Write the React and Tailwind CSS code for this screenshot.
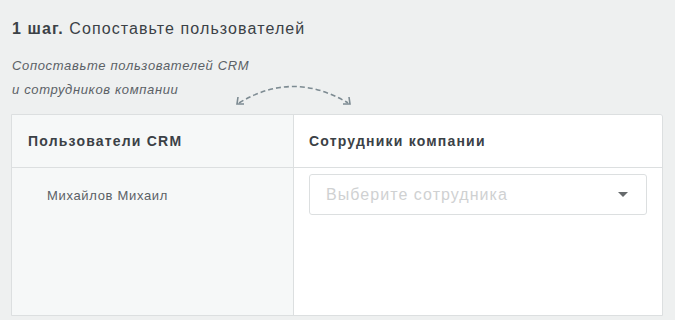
import React from 'react';

// Пунктирная дуга со стрелками между колонками
const ArcArrows = () => (
  <svg width="124" height="30" viewBox="0 0 124 30" className="absolute left-[231px] top-[78px]">
    <path d="M8 25 Q62 -8 117 25" fill="none" stroke="#7d8b92" strokeWidth="1.6" strokeDasharray="5 3" />
    <path d="M7 19 L6 26 L13 26" fill="none" stroke="#7d8b92" strokeWidth="1.6" />
    <path d="M112 26 L119 26 L118 19" fill="none" stroke="#7d8b92" strokeWidth="1.6" />
  </svg>
);

const App = () => {
  const users = [{ id: 1, name: 'Михайлов Михаил' }];

  return (
    <div className="relative w-[675px] h-[320px] bg-[#eef0f0] overflow-hidden font-['Liberation_Sans',Arial,sans-serif]">
      <div className="pl-3 pt-[19px] text-[16px] leading-5 tracking-[1.1px] text-[#3b4146]">
        <span className="font-bold">1 шаг.</span> Сопоставьте пользователей
      </div>
      <div className="pl-3 pt-[15px] text-[13px] leading-6 italic tracking-[0.65px] text-[#5b6166]">
        <div>Сопоставьте пользователей CRM</div>
        <div>и сотрудников компании</div>
      </div>
      <ArcArrows />
      <div className="ml-[11px] mt-[12px] w-[652px] h-[202px] flex border border-[#dcdfe0] rounded-tr-[3px] overflow-hidden">
        <div className="w-[282px] bg-[#f6f8f8] border-r border-[#dcdfe0] flex flex-col">
          <div className="h-[53px] border-b border-[#dcdfe0] flex items-center pl-4 text-[14px] font-bold tracking-[1.2px] text-[#3b4146]">
            Пользователи CRM
          </div>
          {users.map((u) => (
            <div key={u.id} className="pl-[35px] pt-[18px] text-[13px] tracking-[0.67px] text-[#5b6166]">
              {u.name}
            </div>
          ))}
        </div>
        <div className="flex-1 bg-white flex flex-col">
          <div className="h-[53px] border-b border-[#dcdfe0] flex items-center pl-[15px] text-[14px] font-bold tracking-[1.2px] text-[#3b4146]">
            Сотрудники компании
          </div>
          <div className="px-[15px] pt-[6px]">
            <div className="h-[41px] border border-[#dcdfe0] rounded-[3px] flex items-center justify-between pl-4 pr-[18px]">
              <span className="text-[16px] tracking-[1.05px] text-[#cfd1d2]">Выберите сотрудника</span>
              <span className="w-0 h-0 border-l-[5px] border-r-[5px] border-t-[5px] border-l-transparent border-r-transparent border-t-[#666a6c]" />
            </div>
          </div>
        </div>
      </div>
    </div>
  );
};

export default App;
